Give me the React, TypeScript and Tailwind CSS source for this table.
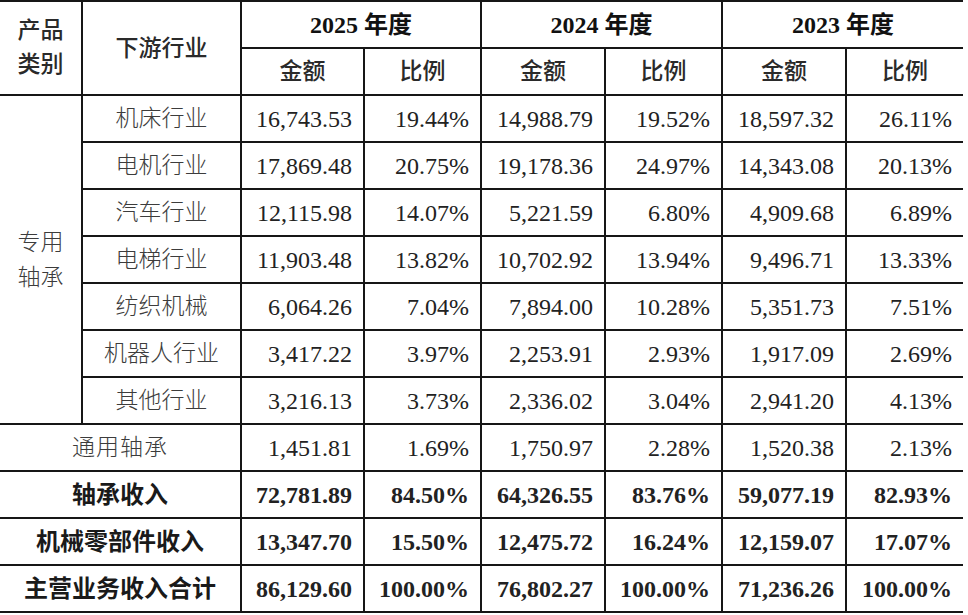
import React from "react";

type Row = {
    name: string;
    values: string[];
};

const special: Row[] = [
    { name: "机床行业", values: ["16,743.53", "19.44%", "14,988.79", "19.52%", "18,597.32", "26.11%"] },
    { name: "电机行业", values: ["17,869.48", "20.75%", "19,178.36", "24.97%", "14,343.08", "20.13%"] },
    { name: "汽车行业", values: ["12,115.98", "14.07%", "5,221.59", "6.80%", "4,909.68", "6.89%"] },
    { name: "电梯行业", values: ["11,903.48", "13.82%", "10,702.92", "13.94%", "9,496.71", "13.33%"] },
    { name: "纺织机械", values: ["6,064.26", "7.04%", "7,894.00", "10.28%", "5,351.73", "7.51%"] },
    { name: "机器人行业", values: ["3,417.22", "3.97%", "2,253.91", "2.93%", "1,917.09", "2.69%"] },
    { name: "其他行业", values: ["3,216.13", "3.73%", "2,336.02", "3.04%", "2,941.20", "4.13%"] },
];

const general: Row = {
    name: "通用轴承",
    values: ["1,451.81", "1.69%", "1,750.97", "2.28%", "1,520.38", "2.13%"],
};

const totals: Row[] = [
    { name: "轴承收入", values: ["72,781.89", "84.50%", "64,326.55", "83.76%", "59,077.19", "82.93%"] },
    { name: "机械零部件收入", values: ["13,347.70", "15.50%", "12,475.72", "16.24%", "12,159.07", "17.07%"] },
    { name: "主营业务收入合计", values: ["86,129.60", "100.00%", "76,802.27", "100.00%", "71,236.26", "100.00%"] },
];

const years = ["2025 年度", "2024 年度", "2023 年度"];

const cell = "border-2 border-[#161616] p-0";
const num = `${cell} text-right pr-[11px] text-[24px] text-[#222]`;
// body labels are thin and greyish in the source scan
const label = "text-center text-[23px] font-light text-[#3c3c3c]";

const Values = ({ values, bold }: { values: string[]; bold?: boolean }) => (
    <>
        {values.map((v, i) => (
            <td key={i} className={`${num} ${bold ? "font-bold text-[#111]" : ""}`}>
                {v}
            </td>
        ))}
    </>
);

export default function App() {
    return (
        <div className="bg-white w-[968px] h-[615px] overflow-hidden font-['Liberation_Serif','Noto_Sans_CJK_SC',serif]">
            <table className="table-fixed border-collapse w-[963px] leading-none">
                <colgroup>
                    <col className="w-[82px]" />
                    <col className="w-[159px]" />
                    <col className="w-[123px]" />
                    <col className="w-[117px]" />
                    <col className="w-[124px]" />
                    <col className="w-[117px]" />
                    <col className="w-[124px]" />
                    <col className="w-[117px]" />
                </colgroup>
                <thead>
                    <tr className="h-[47px]">
                        <th
                            rowSpan={2}
                            className={`${cell} border-l-0 text-[23px] font-medium text-[#2a2a2a] leading-[34px]`}
                        >
                            产品
                            <br />
                            类别
                        </th>
                        <th rowSpan={2} className={`${cell} text-[23px] font-medium text-[#2a2a2a]`}>
                            下游行业
                        </th>
                        {years.map((y) => (
                            <th
                                key={y}
                                colSpan={2}
                                className={`${cell} last:border-r-0 text-[24px] font-bold text-[#111]`}
                            >
                                {y}
                            </th>
                        ))}
                    </tr>
                    <tr className="h-[47px]">
                        {years.map((y) => (
                            <React.Fragment key={y}>
                                <th className={`${cell} text-[23px] font-medium text-[#2a2a2a]`}>金额</th>
                                <th className={`${cell} last:border-r-0 text-[23px] font-medium text-[#2a2a2a]`}>
                                    比例
                                </th>
                            </React.Fragment>
                        ))}
                    </tr>
                </thead>
                <tbody>
                    {special.map((row, i) => (
                        <tr key={row.name} className="h-[47px] [&>td:last-child]:border-r-0">
                            {i === 0 && (
                                <td
                                    rowSpan={special.length}
                                    className={`${cell} border-l-0 ${label} leading-[35px]`}
                                >
                                    专用
                                    <br />
                                    轴承
                                </td>
                            )}
                            <td className={`${cell} ${label}`}>{row.name}</td>
                            <Values values={row.values} />
                        </tr>
                    ))}
                    <tr className="h-[47px] [&>td:last-child]:border-r-0">
                        <td colSpan={2} className={`${cell} border-l-0 ${label} tracking-[1px]`}>
                            {general.name}
                        </td>
                        <Values values={general.values} />
                    </tr>
                    {totals.map((row) => (
                        <tr key={row.name} className="h-[47px] [&>td:last-child]:border-r-0">
                            <td
                                colSpan={2}
                                className={`${cell} border-l-0 text-center text-[24px] font-bold text-[#1a1a1a]`}
                            >
                                {row.name}
                            </td>
                            <Values values={row.values} bold />
                        </tr>
                    ))}
                </tbody>
            </table>
        </div>
    );
}
